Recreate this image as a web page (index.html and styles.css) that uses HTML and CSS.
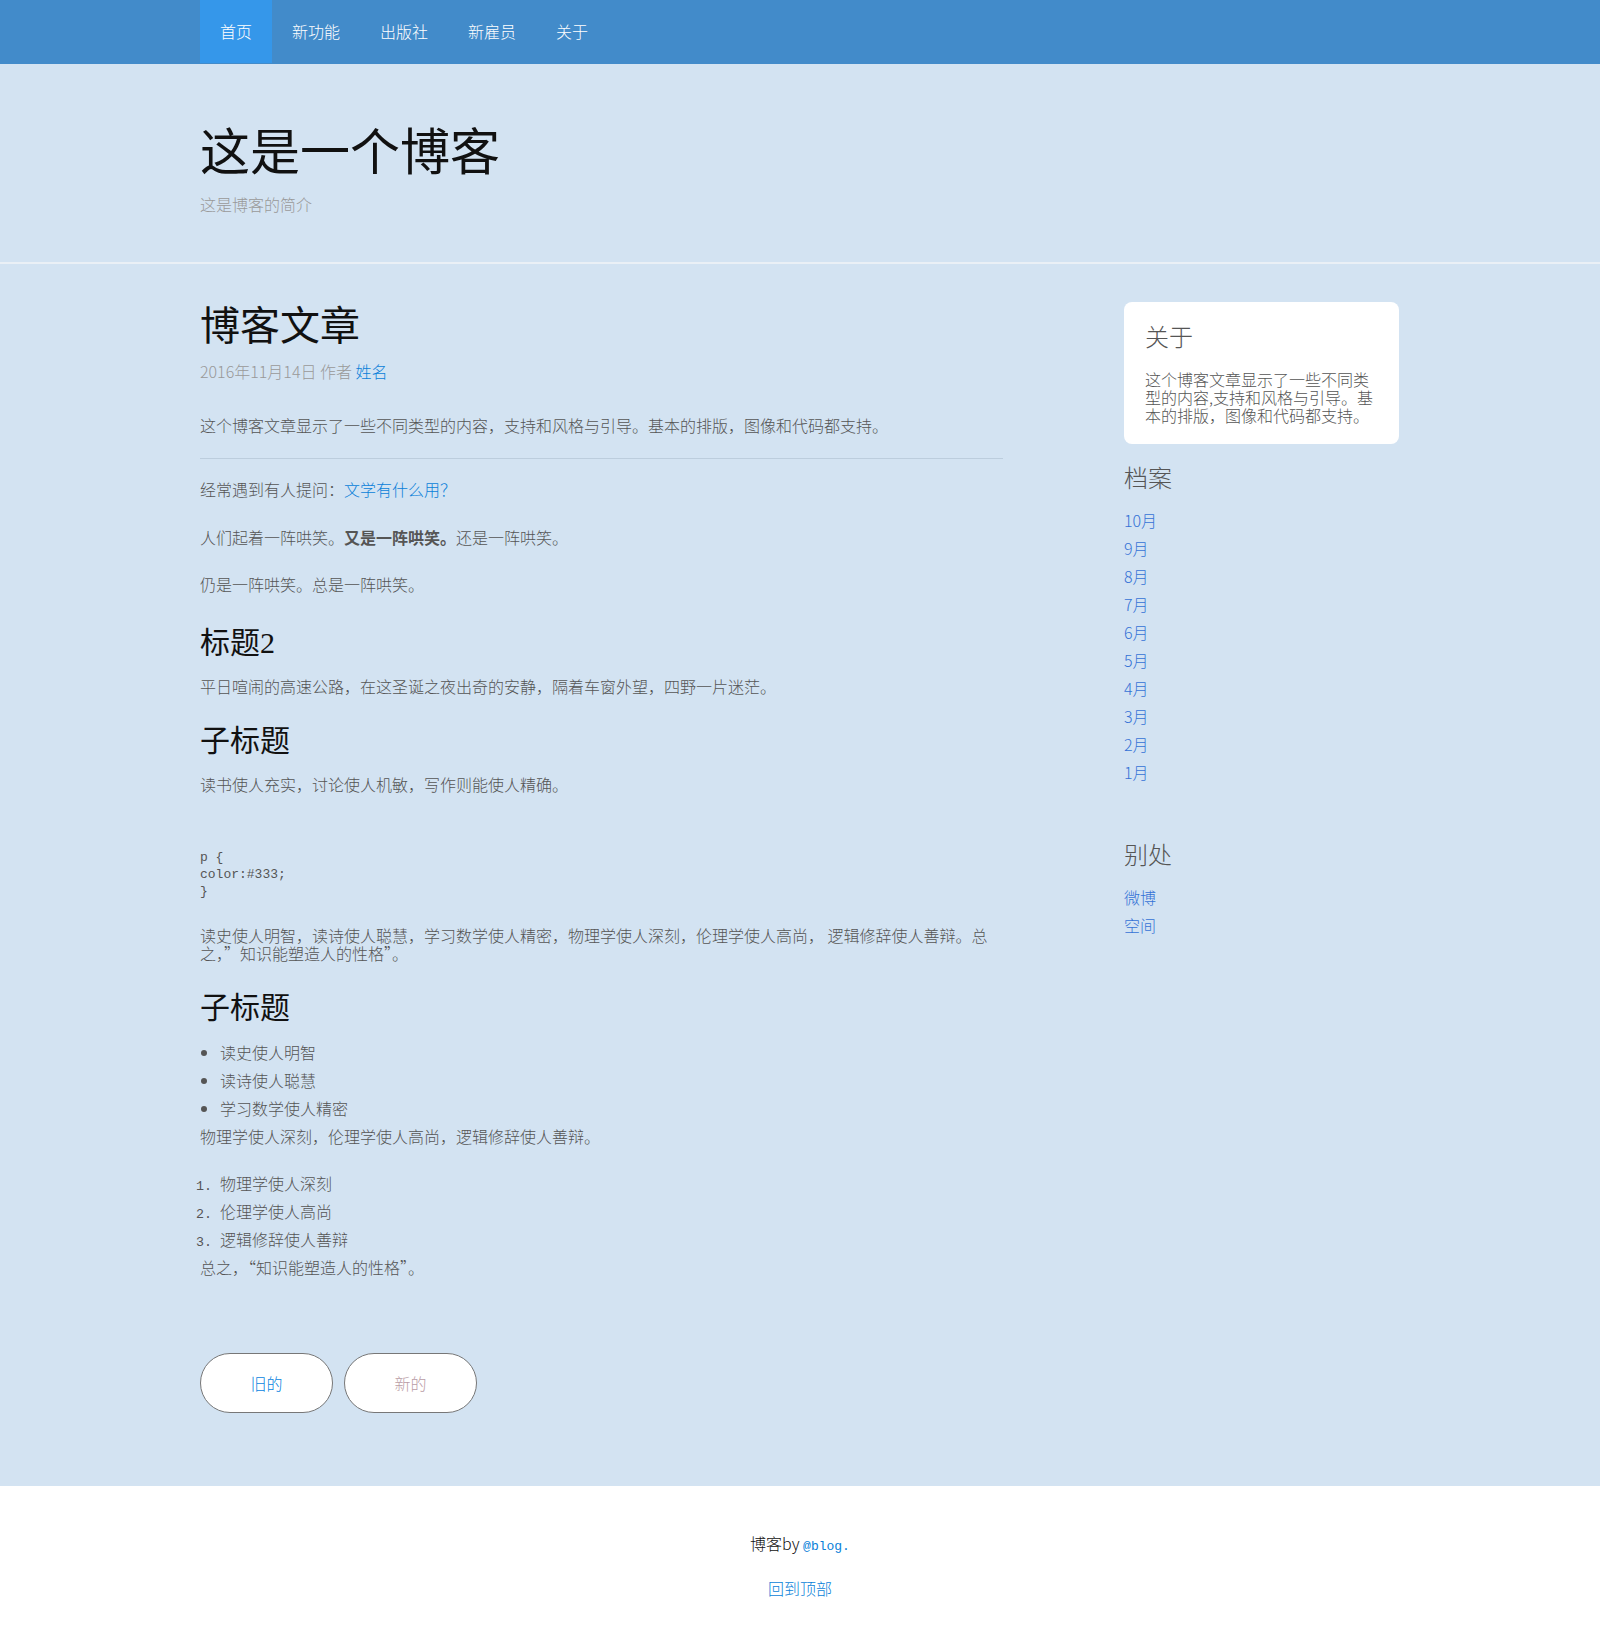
FILE: index.html
```html
<!DOCTYPE html>
<html lang="zh-CN">
<head>
<meta charset="utf-8">
<title>这是一个博客</title>
<link rel="stylesheet" href="styles.css">
</head>
<body>
<div class="masthead">
  <nav class="container nav">
    <a class="nav-item active" href="#">首页</a>
    <a class="nav-item" href="#">新功能</a>
    <a class="nav-item" href="#">出版社</a>
    <a class="nav-item" href="#">新雇员</a>
    <a class="nav-item" href="#">关于</a>
  </nav>
</div>

<div class="page">
  <header class="blog-header">
    <div class="container">
      <h1 class="blog-title">这是一个博客</h1>
      <p class="blog-description">这是博客的简介</p>
    </div>
  </header>

  <div class="container layout">
    <article class="blog-main">
      <h2 class="post-title">博客文章</h2>
      <p class="post-meta">2016年11月14日 作者 <a href="#">姓名</a></p>
      <p>这个博客文章显示了一些不同类型的内容，支持和风格与引导。基本的排版，图像和代码都支持。</p>
      <hr>
      <p>经常遇到有人提问：<a href="#">文学有什么用？</a></p>
      <p>人们起着一阵哄笑。<strong>又是一阵哄笑。</strong>还是一阵哄笑。</p>
      <p>仍是一阵哄笑。总是一阵哄笑。</p>
      <h2 class="section-title">标题2</h2>
      <p>平日喧闹的高速公路，在这圣诞之夜出奇的安静，隔着车窗外望，四野一片迷茫。</p>
      <h3 class="section-title">子标题</h3>
      <p>读书使人充实，讨论使人机敏，写作则能使人精确。</p>
      <pre class="code">p {
color:#333;
}</pre>
      <p>读史使人明智，读诗使人聪慧，学习数学使人精密，物理学使人深刻，伦理学使人高尚， 逻辑修辞使人善辩。总之，”知识能塑造人的性格”。</p>
      <h3 class="section-title">子标题</h3>
      <ul class="post-list">
        <li>读史使人明智</li>
        <li>读诗使人聪慧</li>
        <li>学习数学使人精密</li>
      </ul>
      <p class="list-note">物理学使人深刻，伦理学使人高尚，逻辑修辞使人善辩。</p>
      <ol class="post-list">
        <li>物理学使人深刻</li>
        <li>伦理学使人高尚</li>
        <li>逻辑修辞使人善辩</li>
      </ol>
      <p class="list-note">总之，“知识能塑造人的性格”。</p>
      <nav class="pager">
        <a class="pager-btn" href="#">旧的</a>
        <span class="pager-btn disabled">新的</span>
      </nav>
    </article>

    <aside class="sidebar">
      <div class="about-card">
        <h4 class="side-title">关于</h4>
        <p>这个博客文章显示了一些不同类型的内容,支持和风格与引导。基本的排版，图像和代码都支持。</p>
      </div>
      <div class="side-module">
        <h4 class="side-title">档案</h4>
        <ol class="side-links">
          <li><a href="#">10月</a></li>
          <li><a href="#">9月</a></li>
          <li><a href="#">8月</a></li>
          <li><a href="#">7月</a></li>
          <li><a href="#">6月</a></li>
          <li><a href="#">5月</a></li>
          <li><a href="#">4月</a></li>
          <li><a href="#">3月</a></li>
          <li><a href="#">2月</a></li>
          <li><a href="#">1月</a></li>
        </ol>
      </div>
      <div class="side-module">
        <h4 class="side-title">别处</h4>
        <ol class="side-links">
          <li><a href="#">微博</a></li>
          <li><a href="#">空间</a></li>
        </ol>
      </div>
    </aside>
  </div>
</div>

<footer class="blog-footer">
  <p>博客by <a href="#"><code>@blog.</code></a></p>
  <p><a href="#">回到顶部</a></p>
</footer>
</body>
</html>
```

FILE: styles.css
```css
* { box-sizing: border-box; }

html {
  background: #fff;
}

html, body {
  margin: 0;
  padding: 0;
}

body {
  font-family: "Noto Sans CJK SC", "Noto Sans", sans-serif;
  font-size: 16px;
  line-height: 18px;
  font-weight: 300;
  color: #555;
}

a {
  color: #0a7fd9;
  text-decoration: none;
}

.container {
  width: 1200px;
  margin: 0 auto;
}

/* ---------- masthead ---------- */
.masthead {
  background: #428bca;
  height: 64px;
}

.nav {
  display: flex;
}

.nav-item {
  display: block;
  padding: 0 20px;
  line-height: 63px;
  color: #fff;
  font-weight: 300;
}

.nav-item.active {
  background: #3597ea;
}

.page {
  background: #d3e3f2;
}

/* ---------- header ---------- */
.blog-header {
  padding: 64px 0 48px;
  border-bottom: 2px solid #eaf0f6;
}

.blog-title {
  margin: 0;
  font-family: "Liberation Serif", "Noto Sans CJK SC", serif;
  font-size: 50px;
  line-height: 50px;
  font-weight: 400;
  color: #111;
}

.blog-description {
  margin: 16px 0 0;
  line-height: 20px;
  color: #999;
}

/* ---------- layout ---------- */
.layout {
  display: flex;
  align-items: flex-start;
}

.blog-main {
  width: 803px;
  padding: 41px 0 73px;
}

:where(.blog-main > *) {
  margin: 0;
}

.post-title {
  font-family: "Liberation Serif", "Noto Sans CJK SC", serif;
  font-size: 40px;
  line-height: 44px;
  font-weight: 400;
  color: #111;
}

.post-meta {
  color: #999;
}

.post-title + .post-meta { margin-top: 13px; }
.post-meta + p { margin-top: 36px; }

.blog-main hr {
  height: 0;
  border: 0;
  border-top: 1px solid #bccddd;
  margin: 24px 0 0;
}

hr + p { margin-top: 21px; }
p + p { margin-top: 29.5px; }

.section-title {
  font-family: "Liberation Serif", "Noto Sans CJK SC", serif;
  font-size: 30px;
  line-height: 33px;
  font-weight: 400;
  color: #111;
}

p + h2.section-title { margin-top: 33px; }
p + h3.section-title { margin-top: 29px; }
.section-title + p { margin-top: 18px; }

strong {
  font-weight: 700;
}

.code {
  font-family: "Liberation Mono", monospace;
  font-size: 13px;
  line-height: 17px;
  color: #555;
  white-space: pre;
}

p + .code { margin-top: 56px; }
.code + p { margin-top: 25.5px; }

.post-list {
  padding-left: 20px;
}

.post-list li {
  line-height: 28px;
}

ol.post-list li::marker {
  font-family: "Liberation Mono", monospace;
  font-size: 13.33px;
}

.section-title + .post-list { margin-top: 14px; }
p + .post-list { margin-top: 19px; }

.list-note {
  line-height: 28px;
}

.post-list + .list-note { margin-top: 0; }

.pager {
  display: flex;
  gap: 11px;
}

p + .pager { margin-top: 72px; }

.pager-btn {
  display: flex;
  align-items: center;
  justify-content: center;
  width: 133px;
  height: 60px;
  border: 1px solid #777;
  border-radius: 30px;
  background: #fff;
  color: #0a84e0;
  font-weight: 300;
}

.pager-btn.disabled {
  color: #b99ca5;
}

/* ---------- sidebar ---------- */
.sidebar {
  width: 275px;
  margin-left: 121px;
  padding-top: 38px;
}

.about-card {
  background: #fff;
  border-radius: 8px;
  padding: 21px 20px 20px 21px;
}

.about-card p {
  margin: 21px 0 0;
}

.side-title {
  margin: 0;
  font-size: 24px;
  line-height: 26px;
  font-weight: 300;
  color: #555;
}

.side-module {
  margin-top: 20px;
}

.side-module + .side-module {
  margin-top: 55px;
}

.side-links {
  list-style: none;
  margin: 16px 0 0;
  padding: 0;
}

.side-links li {
  line-height: 28px;
}

.side-links a {
  color: #3572d6;
}

/* ---------- footer ---------- */
.blog-footer {
  background: #fff;
  text-align: center;
  padding: 48px 0 55px;
  color: #111;
}

.blog-footer p {
  margin: 0;
}

.blog-footer p + p {
  margin-top: 23px;
}

.blog-footer code {
  font-family: "Liberation Mono", monospace;
  font-size: 13px;
}
```
